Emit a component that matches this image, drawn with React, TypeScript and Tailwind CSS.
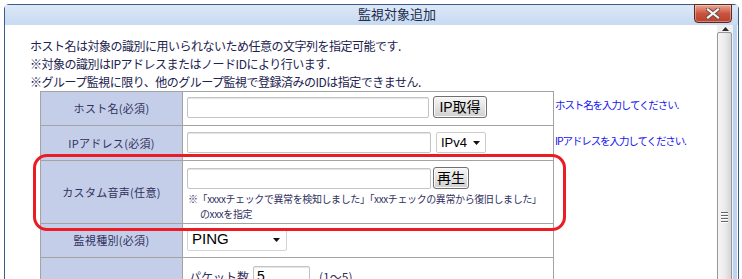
import React from "react";

const jp = "font-['Noto_Sans_CJK_JP','Noto_Sans',sans-serif]";
const latin = "font-['Liberation_Sans','Noto_Sans_CJK_JP',sans-serif]";

const Caret = () => (
  <svg width="7" height="4" viewBox="0 0 7 4" className="block">
    <polygon points="0,0 7,0 3.5,4" fill="#111" />
  </svg>
);

const TextBox = ({ w, value }: { w: string; value?: string }) => (
  <div
    className={`${w} h-[21px] border border-[#c4c4c4] rounded-[2px] bg-white shadow-[inset_0_1px_1px_#e4e4e4] px-[3px] text-[14px] leading-[19px] text-black ${latin}`}
  >
    {value}
  </div>
);

const Btn = ({ w, label }: { w: string; label: string }) => (
  <div
    className={`${w} h-[22px] border border-[#707070] rounded-[3px] bg-gradient-to-b from-[#f6f6f6] via-[#e4e4e4] to-[#cfcfcf] shadow-[inset_0_0_0_1px_#fafafa] flex items-center justify-center text-[14px] text-black ${latin}`}
  >
    {label}
  </div>
);

const Row = ({
  h,
  label,
  children,
  hint,
  hintPad,
}: {
  h: string;
  label: string;
  children: React.ReactNode;
  hint?: string;
  hintPad?: string;
}) => (
  <div className={`flex ${h}`}>
    <div className="w-[142px] shrink-0 border-l border-t border-[#a3a3a3] bg-[#c5cee8] flex items-center justify-center text-[11px] text-[#30305e] tracking-[0.3px]">
      {label}
    </div>
    <div className="w-[372px] shrink-0 border-l border-r border-t border-[#a3a3a3] bg-white pl-[4px]">
      {children}
    </div>
    {hint && (
      <div className={`${hintPad} pl-[1px] text-[10.5px] leading-[14px] tracking-[-1.1px] text-[#1515ee] whitespace-nowrap`}>
        {hint}
      </div>
    )}
  </div>
);

export default function App() {
  return (
    <div className={`w-[742px] h-[279px] bg-white overflow-hidden relative pl-[4px] pt-[4px] ${jp}`}>
      {/* window */}
      <div className="w-[735px] h-[300px] border border-[#3b5b8c] rounded-t-[5px] flex flex-col">
        {/* title bar */}
        <div className="h-[20px] shrink-0 flex bg-gradient-to-b from-[#dde8f6] to-[#c7daf1]">
          <div className="ml-[353px] pt-[1px] text-[13px] leading-[16px] text-[#1c2c4c]">監視対象追加</div>
          <div className="flex-1" />
          <div className="mr-[6px] -mt-[1px] w-[38px] h-[19px] rounded-b-[4px] border border-[#5a2a22] bg-gradient-to-b from-[#e9a593] via-[#c9543f] to-[#b8412d] shadow-[inset_0_0_0_1px_rgba(255,255,255,0.35)] flex items-center justify-center">
            <svg width="14" height="11" viewBox="0 0 14 11">
              <path d="M2 1.5 L12 9.5 M12 1.5 L2 9.5" stroke="#6b4a44" strokeWidth="4" strokeLinecap="square" />
              <path d="M2 1.5 L12 9.5 M12 1.5 L2 9.5" stroke="#f4f4f4" strokeWidth="2.2" strokeLinecap="square" />
            </svg>
          </div>
        </div>

        {/* body */}
        <div className="flex flex-1 min-h-0">
          <div className="w-[712px] shrink-0 pt-[12px] pl-[25px] text-[#22224f]">
            <div className="text-[12px] leading-[18px] tracking-[-0.5px] whitespace-nowrap">
              <div>ホスト名は対象の識別に用いられないため任意の文字列を指定可能です.</div>
              <div>※対象の識別はIPアドレスまたはノードIDにより行います.</div>
              <div>※グループ監視に限り、他のグループ監視で登録済みのIDは指定できません.</div>
            </div>

            {/* form table */}
            <div className="ml-[10px]">
              <Row h="h-[34px]" label="ホスト名(必須)" hint="ホスト名を入力してください." hintPad="pt-[7px]">
                <div className="flex gap-[4px] pt-[5px] items-start">
                  <TextBox w="w-[242px]" />
                  <div className="-mt-[1px]">
                    <Btn w="w-[54px]" label="IP取得" />
                  </div>
                </div>
              </Row>
              <Row h="h-[35px]" label="IPアドレス(必須)" hint="IPアドレスを入力してください." hintPad="pt-[9px]">
                <div className="flex gap-[5px] pt-[6px] items-start">
                  <TextBox w="w-[244px]" />
                  <div className={`w-[50px] h-[21px] border border-[#cdcdcd] rounded-[2px] bg-white flex items-center justify-between pl-[4px] pr-[5px] text-[13px] text-black ${latin}`}>
                    <span>IPv4</span>
                    <Caret />
                  </div>
                </div>
              </Row>
              <Row h="h-[63px]" label="カスタム音声(任意)">
                <div className="pt-[7px]">
                  <div className="flex gap-[2px] items-start">
                    <TextBox w="w-[244px]" />
                    <div className="-mt-[1px]">
                      <Btn w="w-[36px]" label="再生" />
                    </div>
                  </div>
                  <div className="pl-[1px] pt-[2px] text-[10px] leading-[15px] tracking-[-0.4px] text-[#30305e] whitespace-nowrap">
                    <div>※「xxxxチェックで異常を検知しました」「xxxチェックの異常から復旧しました」</div>
                    <div className="pl-[12px]">のxxxを指定</div>
                  </div>
                </div>
              </Row>
              <Row h="h-[34px]" label="監視種別(必須)">
                <div className="pt-[4px]">
                  <div className={`w-[100px] h-[23px] border border-[#d4d4d4] rounded-[2px] bg-white flex items-center justify-between pl-[4px] pr-[6px] text-[15px] text-black ${latin}`}>
                    <span>PING</span>
                    <Caret />
                  </div>
                </div>
              </Row>
              <Row h="h-[60px]" label="">
                <div className="flex items-start pt-[8px] gap-[4px] text-[12px] text-[#30305e]">
                  <span className="pt-[2px] pl-[2px]">パケット数</span>
                  <TextBox w="w-[57px]" value="5" />
                  <span className="pt-[2px] pl-[5px]">(1～5)</span>
                </div>
              </Row>
            </div>
          </div>

          {/* scrollbar */}
          <div className="w-[16px] shrink-0 bg-[#f0f0f0] flex flex-col">
            <div className="h-[18px] flex items-center justify-center">
              <svg width="7" height="4" viewBox="0 0 7 4">
                <polygon points="3.5,0 7,4 0,4" fill="#2a2a2a" />
              </svg>
            </div>
            <div className="w-[15px] h-[400px] border border-[#979797] rounded-[2px] bg-gradient-to-r from-[#f5f5f5] via-[#ececec] to-[#d5d5d5] flex flex-col items-center pt-[179px] gap-[1px]">
              <div className="w-[7px] h-[2px] bg-[#666] border-b border-[#fff]" />
              <div className="w-[7px] h-[2px] bg-[#666] border-b border-[#fff]" />
              <div className="w-[7px] h-[2px] bg-[#666] border-b border-[#fff]" />
              <div className="w-[7px] h-[2px] bg-[#666] border-b border-[#fff]" />
            </div>
          </div>
          <div className="w-[4px] shrink-0 bg-[#bdd5f1]" />
        </div>
      </div>

      {/* red highlight */}
      <div className="absolute left-[33px] top-[154px] w-[533px] h-[77px] border-[3px] border-[#ec1c24] rounded-[14px] pointer-events-none" />
    </div>
  );
}
